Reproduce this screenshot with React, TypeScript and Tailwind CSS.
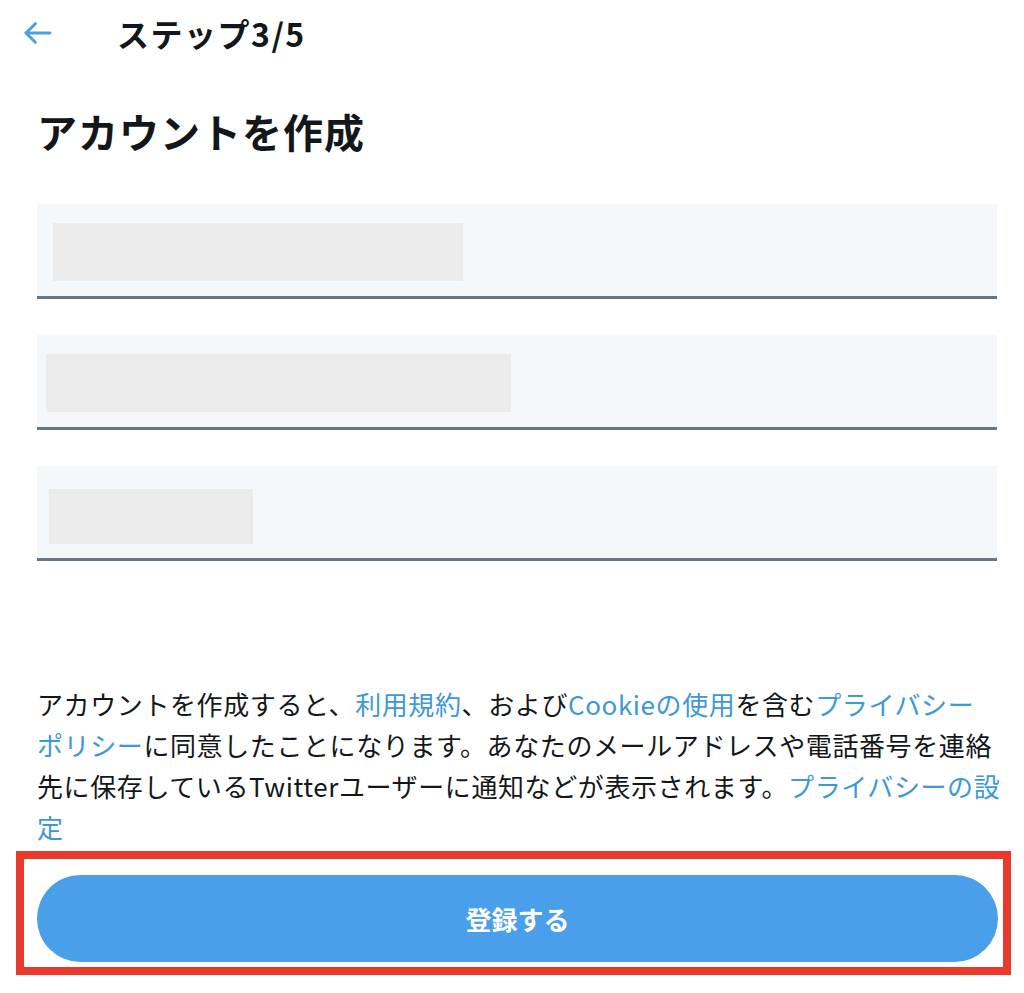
import type { ReactNode } from 'react';

const jp = { fontFamily: '"Noto Sans CJK JP", "Noto Sans", sans-serif' };

function Field({ children }: { children: ReactNode }) {
  return (
    <div className="h-[95px] bg-[#f5f8fa] border-b-[3px] border-[#657786] relative">
      {children}
    </div>
  );
}

function Link({ children }: { children: ReactNode }) {
  return <span className="text-[#3d98d8]">{children}</span>;
}

export default function App() {
  return (
    <div className="w-[1024px] h-[993px] bg-white overflow-hidden text-[#14171a]" style={jp}>
      {/* Header */}
      <header className="h-[64px] flex items-center pl-[22px] pt-[2px]">
        <svg width="32" height="32" viewBox="0 0 24 24" fill="none" stroke="#4a9fdc" strokeWidth="2.2" strokeLinecap="round" strokeLinejoin="round">
          <line x1="3" y1="12" x2="21" y2="12" />
          <polyline points="10,5 3,12 10,19" />
        </svg>
        <h2 className="ml-[63px] text-[32px] font-bold leading-none tracking-[1.5px]">ステップ3/5</h2>
      </header>

      <div className="pl-[37px] pr-[27px]">
        <h1 className="mt-[43px] text-[40px] font-bold leading-[48px] tracking-[1px]">アカウントを作成</h1>

        {/* Form fields */}
        <div className="mt-[49px] flex flex-col gap-[36px]">
          <Field>
            <div className="ml-[16px] mt-[19px] w-[410px] h-[58px] bg-[#ebebeb]" />
          </Field>
          <Field>
            <div className="ml-[9px] mt-[19px] w-[465px] h-[58px] bg-[#ebebeb]" />
          </Field>
          <Field>
            <div className="ml-[12px] mt-[23px] w-[204px] h-[55px] bg-[#ebebeb]" />
          </Field>
        </div>

        {/* Terms */}
        <p className="mt-[122px] text-[26px] leading-[41px] tracking-[0.6px] whitespace-nowrap">
          アカウントを作成すると、<Link>利用規約</Link>、および<Link>Cookieの使用</Link>を含む<Link>プライバシー</Link>
          <br />
          <Link>ポリシー</Link>に同意したことになります。あなたのメールアドレスや電話番号を連絡
          <br />
          先に保存しているTwitterユーザーに通知などが表示されます。<Link>プライバシーの設</Link>
          <br />
          <Link>定</Link>
        </p>
      </div>

      {/* Submit */}
      <div className="ml-[16px] mt-[4px] w-[995px] border-[8px] border-[#e8392a] pl-[13px] pr-[5px] pt-[16px] pb-[5px]">
        <button className="w-full h-[87px] rounded-full bg-[#4a9fea] text-white text-[26px] font-bold">
          登録する
        </button>
      </div>
    </div>
  );
}
